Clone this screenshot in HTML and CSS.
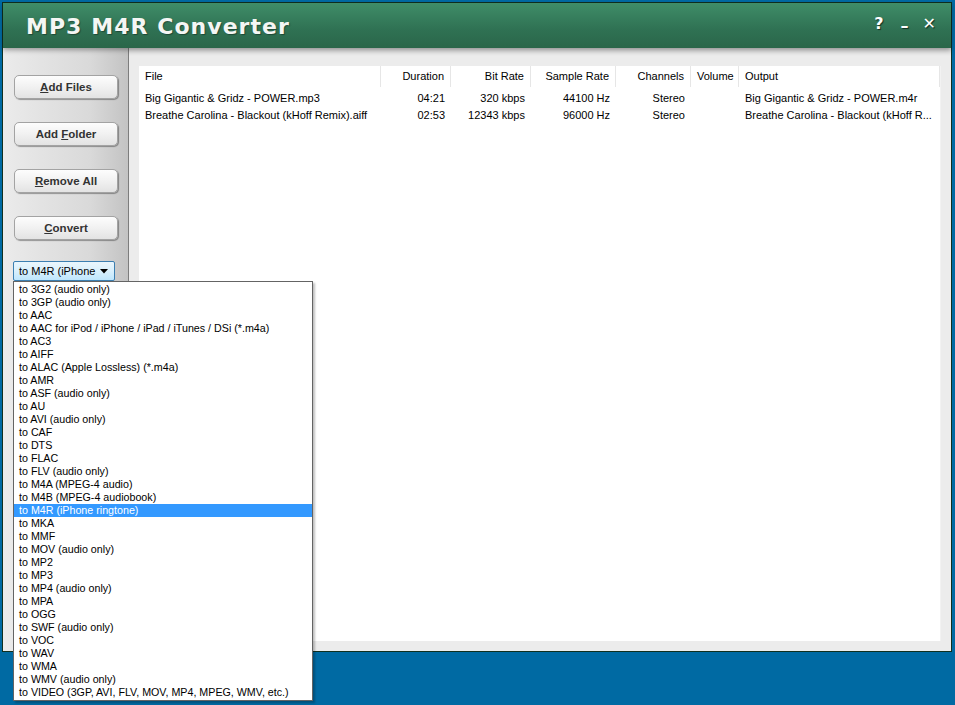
FILE: index.html
```html
<!DOCTYPE html>
<html>
<head>
<meta charset="utf-8">
<link rel="stylesheet" href="styles.css">
</head>
<body>
<div class="window">
  <div class="titlebar">
    <div class="title">MP3 M4R Converter</div>
    <div class="controls">
      <span class="ctl help">?</span>
      <span class="ctl min">–</span>
      <span class="ctl">✕</span>
    </div>
  </div>
  <div class="main">
    <div class="sidebar">
      <button class="btn"><u>A</u>dd Files</button>
      <button class="btn">Add <u>F</u>older</button>
      <button class="btn"><u>R</u>emove All</button>
      <button class="btn"><u>C</u>onvert</button>
      <div class="combo-wrap">
        <div class="combo">
          <span class="combo-text">to M4R (iPhone</span>
          <svg class="arrow" width="8" height="5" viewBox="0 0 8 5"><path d="M0 0H8L4 4.5Z" fill="#000"/></svg>
        </div>
        <ul class="dropdown">
          <li>to 3G2 (audio only)</li>
          <li>to 3GP (audio only)</li>
          <li>to AAC</li>
          <li>to AAC for iPod / iPhone / iPad / iTunes / DSi (*.m4a)</li>
          <li>to AC3</li>
          <li>to AIFF</li>
          <li>to ALAC (Apple Lossless) (*.m4a)</li>
          <li>to AMR</li>
          <li>to ASF (audio only)</li>
          <li>to AU</li>
          <li>to AVI (audio only)</li>
          <li>to CAF</li>
          <li>to DTS</li>
          <li>to FLAC</li>
          <li>to FLV (audio only)</li>
          <li>to M4A (MPEG-4 audio)</li>
          <li>to M4B (MPEG-4 audiobook)</li>
          <li class="sel">to M4R (iPhone ringtone)</li>
          <li>to MKA</li>
          <li>to MMF</li>
          <li>to MOV (audio only)</li>
          <li>to MP2</li>
          <li>to MP3</li>
          <li>to MP4 (audio only)</li>
          <li>to MPA</li>
          <li>to OGG</li>
          <li>to SWF (audio only)</li>
          <li>to VOC</li>
          <li>to WAV</li>
          <li>to WMA</li>
          <li>to WMV (audio only)</li>
          <li>to VIDEO (3GP, AVI, FLV, MOV, MP4, MPEG, WMV, etc.)</li>
        </ul>
      </div>
    </div>
    <div class="content">
      <div class="list">
        <div class="row head">
          <div class="c left">File</div>
          <div class="c">Duration</div>
          <div class="c">Bit Rate</div>
          <div class="c">Sample Rate</div>
          <div class="c">Channels</div>
          <div class="c">Volume</div>
          <div class="c left">Output</div>
        </div>
        <div class="row">
          <div class="c left">Big Gigantic &amp; Gridz - POWER.mp3</div>
          <div class="c">04:21</div>
          <div class="c">320 kbps</div>
          <div class="c">44100 Hz</div>
          <div class="c">Stereo</div>
          <div class="c"></div>
          <div class="c left">Big Gigantic &amp; Gridz - POWER.m4r</div>
        </div>
        <div class="row">
          <div class="c left">Breathe Carolina - Blackout (kHoff Remix).aiff</div>
          <div class="c">02:53</div>
          <div class="c">12343 kbps</div>
          <div class="c">96000 Hz</div>
          <div class="c">Stereo</div>
          <div class="c"></div>
          <div class="c left">Breathe Carolina - Blackout (kHoff R...</div>
        </div>
      </div>
    </div>
  </div>
</div>
</body>
</html>
```
FILE: styles.css
```css
* { box-sizing: border-box; }
html, body { margin: 0; padding: 0; }
body {
  background: #006aa3;
  width: 955px;
  height: 705px;
  overflow: hidden;
  font-family: "Liberation Sans", Arial, sans-serif;
  font-size: 11px;
  color: #000;
}
.window {
  margin: 2px 0 0 2px;
  width: 950px;
  height: 650px;
  border: 1px solid #10301f;
  display: flex;
  flex-direction: column;
  background: #ebebeb;
}
.titlebar {
  height: 45px;
  flex: none;
  background: linear-gradient(#3f8d68, #2f7153 60%, #2a6649);
  display: flex;
  align-items: center;
  justify-content: space-between;
  padding: 0 15px 0 23px;
  position: relative;
  z-index: 2;
  box-shadow: 0 2px 5px rgba(0,0,0,0.35);
}
.title {
  color: #f4f6f4;
  font-family: "DejaVu Sans", Verdana, sans-serif;
  font-weight: bold;
  font-size: 22px;
  letter-spacing: 1.05px;
  text-shadow: 1px 1px 1px rgba(0,0,0,0.35);
  margin-top: 1px;
}
.controls {
  display: flex;
  gap: 14px;
  align-items: center;
  margin-top: -4px;
}
.ctl {
  color: #fff;
  font-family: "DejaVu Sans", Verdana, sans-serif;
  font-weight: bold;
  font-size: 16px;
  text-shadow: 1px 1px 1px rgba(0,0,0,0.6);
}
.ctl.help { margin-right: 3px; }
.ctl.min { margin-top: 3px; }
.main {
  flex: 1;
  display: flex;
  min-height: 0;
}
.sidebar {
  width: 126px;
  flex: none;
  background: linear-gradient(90deg, #ebebeb, #d9d9d9 70%, #c3c3c3);
  border-right: 1px solid #7d7d7d;
  display: flex;
  flex-direction: column;
  padding: 27px 0 0 11px;
  gap: 23px;
}
.btn {
  width: 104px;
  height: 24px;
  border: 1px solid #a3a3a3;
  border-radius: 5px;
  background: linear-gradient(#fdfdfd, #f1f1f1 50%, #e3e3e3);
  box-shadow: 1px 1px 1px rgba(0,0,0,0.35);
  font-family: "Liberation Sans", Arial, sans-serif;
  font-weight: bold;
  font-size: 11.5px;
  color: #333;
  padding: 0;
}
.combo-wrap {
  position: relative;
  margin-top: -2px;
  margin-left: -1px;
}
.combo {
  width: 102px;
  height: 20px;
  border: 1px solid #3c7fb1;
  border-radius: 2px;
  background: linear-gradient(#eaf6fd, #d9f0fc 50%, #bee6fd);
  display: flex;
  align-items: center;
  justify-content: space-between;
  padding: 0 6px 0 5px;
  overflow: hidden;
}
.combo-text { white-space: nowrap; font-size: 11px; }
.arrow { flex: none; }
.dropdown {
  position: absolute;
  left: 0;
  top: 20px;
  width: 300px;
  margin: 0;
  padding: 1px 0;
  list-style: none;
  background: #fff;
  border: 1px solid #646464;
  box-shadow: 2px 2px 2px rgba(0,0,0,0.25);
  z-index: 5;
}
.dropdown li {
  height: 13px;
  line-height: 13px;
  padding-left: 5px;
  white-space: nowrap;
  font-size: 10.7px;
}
.dropdown li.sel {
  background: #3399ff;
  color: #fff;
}
.content {
  flex: 1;
  padding: 18px 10px 10px 10px;
  background: linear-gradient(#dcdcdc, #ececec 8px, #ececec);
}
.list {
  height: 100%;
  background: #fff;
  border-right: 1px solid #f2f2f2;
}
.row {
  display: grid;
  grid-template-columns: 242px 70px 80px 85px 75px 48px 1fr;
  height: 17px;
  line-height: 17px;
}
.row.head {
  height: 21px;
  line-height: 21px;
  margin-bottom: 3px;
  background: #fff;
}
.row.head .c { border-right: 1px solid #e6e6e6; }
.c {
  text-align: right;
  padding: 0 6px;
  white-space: nowrap;
  overflow: hidden;
}
.c.left { text-align: left; }
```
